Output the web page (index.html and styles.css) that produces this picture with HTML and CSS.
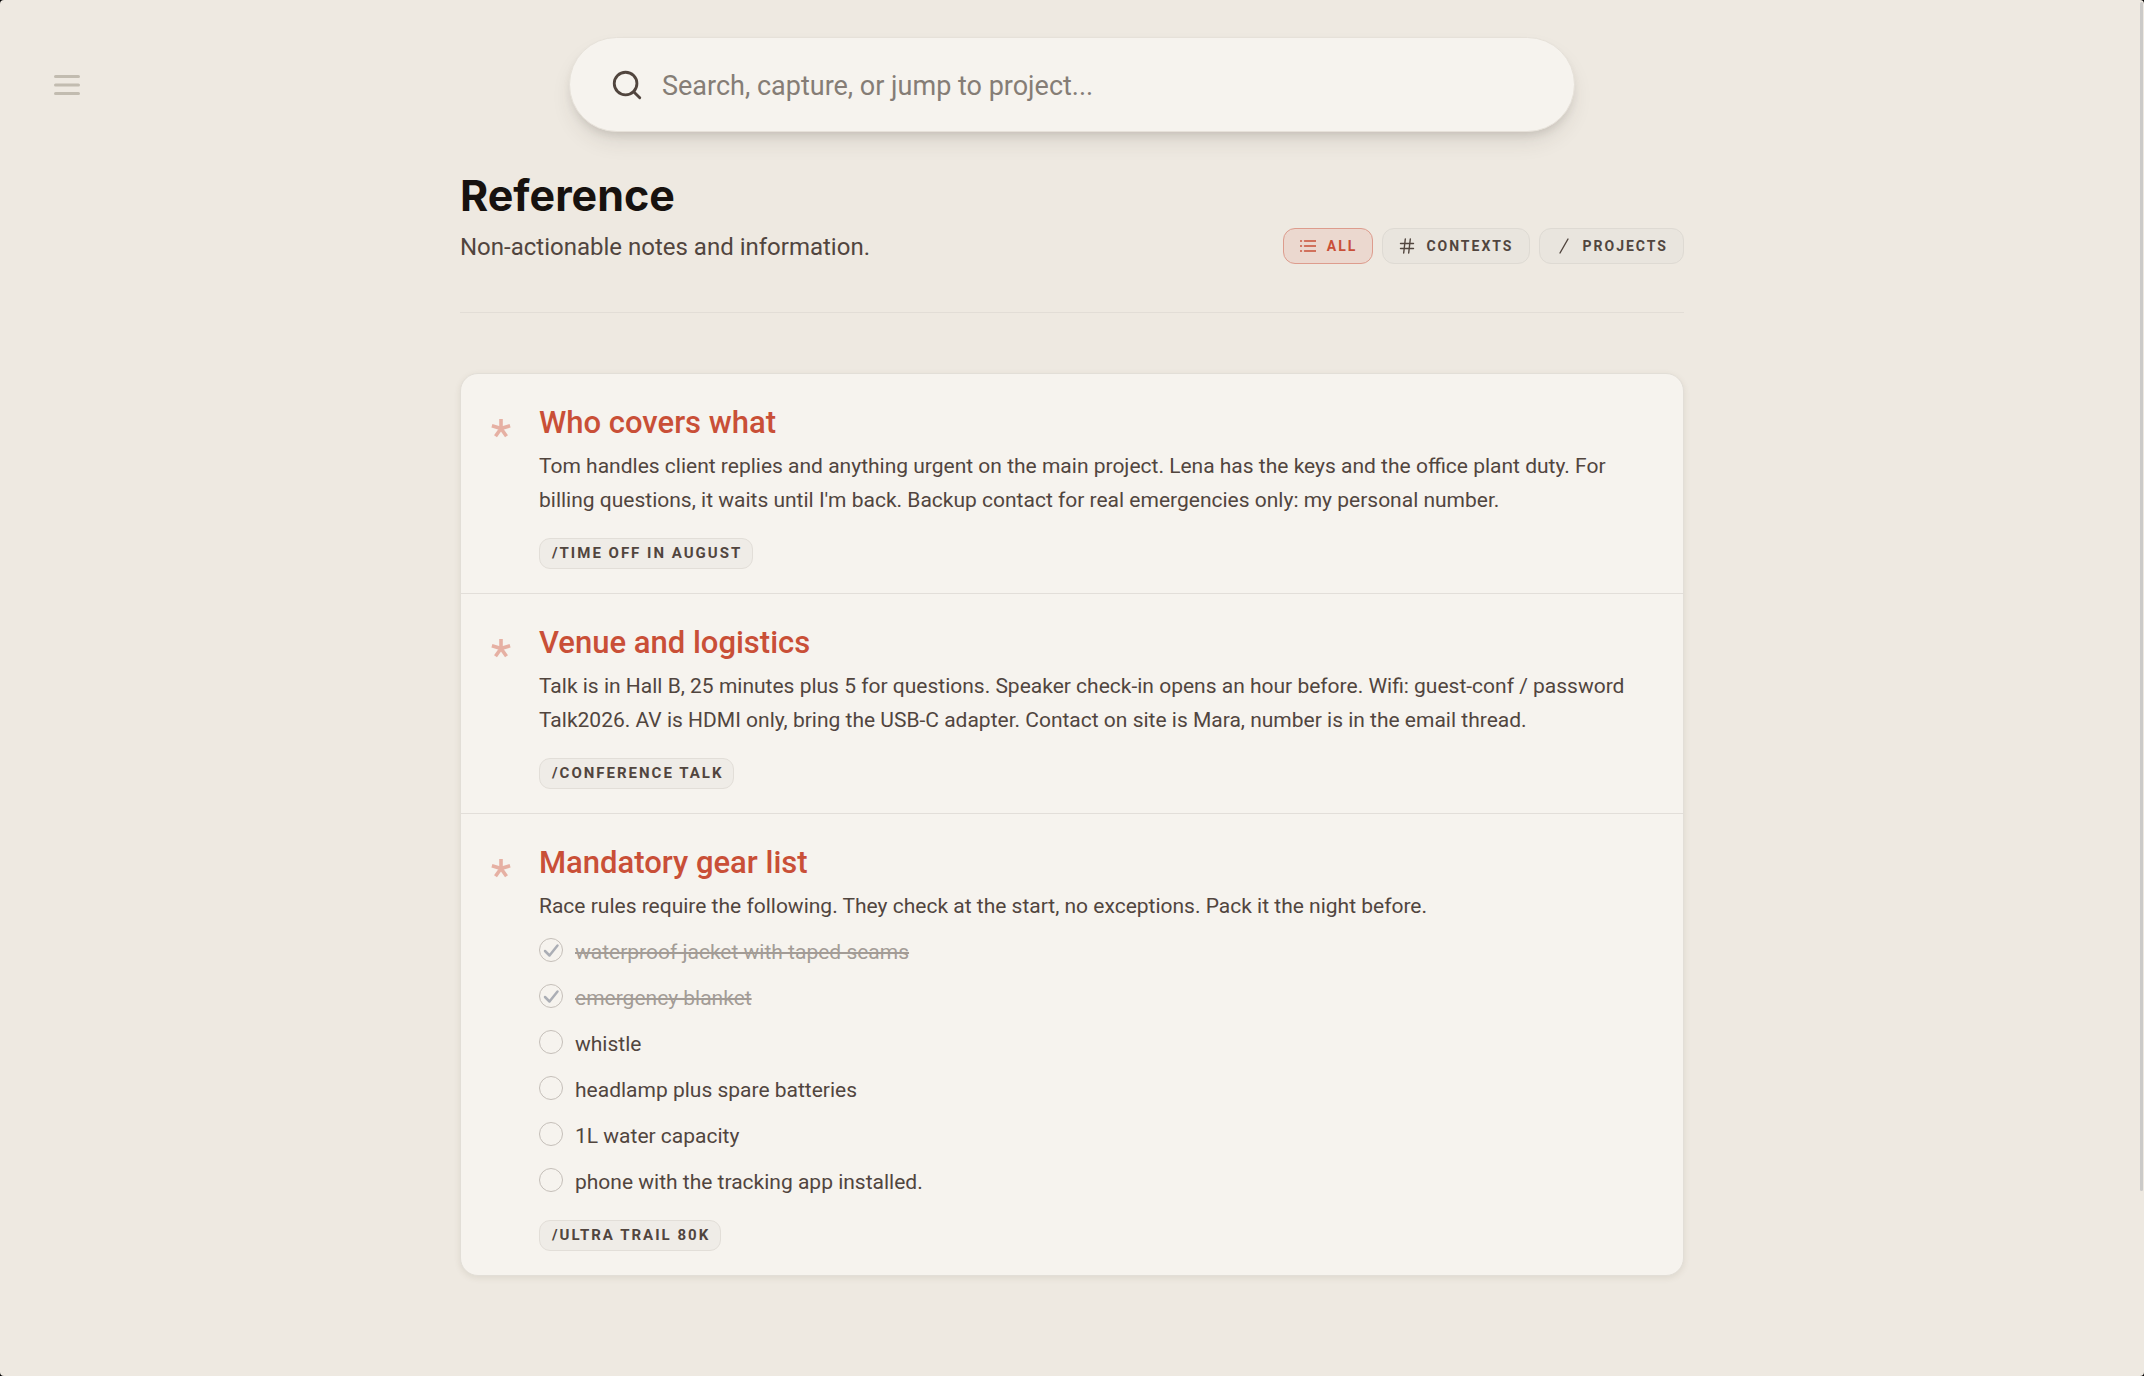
FILE: index.html
```html
<!DOCTYPE html>
<html lang="en">
<head>
    <meta charset="UTF-8">
    <meta name="viewport" content="width=device-width, initial-scale=1.0">
    <title>Reference</title>
    <link rel="stylesheet" href="styles.css">
</head>
<body>
    <div class="window">
        <header class="topbar">
            <button class="menu-btn" type="button" aria-label="Open menu">
                <svg viewBox="0 0 26 22" width="26" height="22"><path d="M1.5 2.5h23M1.5 11h23M1.5 19.5h23"/></svg>
            </button>
            <label class="search">
                <svg class="search-icon" viewBox="0 0 24 24" width="34" height="34"><circle cx="11" cy="11" r="8"/><path d="m21 21-4.3-4.3"/></svg>
                <input type="text" placeholder="Search, capture, or jump to project..." aria-label="Search">
            </label>
        </header>

        <main class="container">
            <div class="page-head">
                <div>
                    <h1>Reference</h1>
                    <p class="subtitle">Non-actionable notes and information.</p>
                </div>
                <div class="filters">
                    <button class="filter active" type="button">
                        <svg viewBox="0 0 16 16" width="16" height="16"><path d="M4.5 3H16M4.5 8H16M4.5 13H16M.5 3h1M.5 8h1M.5 13h1"/></svg>
                        All
                    </button>
                    <button class="filter" type="button">
                        <svg viewBox="0 0 16 16" width="16" height="16"><path d="M1.5 5.5h13M1.500 10.500h13M6.300 1 4.700 15M11.300 1 9.700 15"/></svg>
                        Contexts
                    </button>
                    <button class="filter" type="button">
                        <svg viewBox="0 0 16 16" width="16" height="16"><path d="M12 1 4 15"/></svg>
                        Projects
                    </button>
                </div>
            </div>

            <section class="notes">
                <article class="note">
                    <svg class="star" viewBox="0 0 20 20" width="20" height="20"><path d="M10 10.500V1M10 10.500.9 7.800M10 10.500 19.100 7.800M10 10.500 4.500 18.300M10 10.500 15.500 18.300"/></svg>
                    <div class="note-body">
                        <h2>Who covers what</h2>
                        <p>Tom handles client replies and anything urgent on the main project. Lena has the keys and the office plant duty. For billing questions, it waits until I'm back. Backup contact for real emergencies only: my personal number.</p>
                        <a class="tag" href="#">/Time off in August</a>
                    </div>
                </article>

                <article class="note">
                    <svg class="star" viewBox="0 0 20 20" width="20" height="20"><path d="M10 10.500V1M10 10.500.9 7.800M10 10.500 19.100 7.800M10 10.500 4.500 18.300M10 10.500 15.500 18.300"/></svg>
                    <div class="note-body">
                        <h2>Venue and logistics</h2>
                        <p>Talk is in Hall B, 25 minutes plus 5 for questions. Speaker check-in opens an hour before. Wifi: guest-conf / password Talk2026. AV is HDMI only, bring the USB-C adapter. Contact on site is Mara, number is in the email thread.</p>
                        <a class="tag" href="#">/Conference talk</a>
                    </div>
                </article>

                <article class="note">
                    <svg class="star" viewBox="0 0 20 20" width="20" height="20"><path d="M10 10.500V1M10 10.500.9 7.800M10 10.500 19.100 7.800M10 10.500 4.500 18.300M10 10.500 15.500 18.300"/></svg>
                    <div class="note-body">
                        <h2>Mandatory gear list</h2>
                        <p>Race rules require the following. They check at the start, no exceptions. Pack it the night before.</p>
                        <ul class="checklist">
                            <li><label><span class="check"><input type="checkbox" checked><svg viewBox="0 0 24 24" width="24" height="24"><path d="m6 13 4.500 4.500 8-10"/></svg></span><span class="text">waterproof jacket with taped seams</span></label></li>
                            <li><label><span class="check"><input type="checkbox" checked><svg viewBox="0 0 24 24" width="24" height="24"><path d="m6 13 4.500 4.500 8-10"/></svg></span><span class="text">emergency blanket</span></label></li>
                            <li><label><span class="check"><input type="checkbox"></span><span class="text">whistle</span></label></li>
                            <li><label><span class="check"><input type="checkbox"></span><span class="text">headlamp plus spare batteries</span></label></li>
                            <li><label><span class="check"><input type="checkbox"></span><span class="text">1L water capacity</span></label></li>
                            <li><label><span class="check"><input type="checkbox"></span><span class="text">phone with the tracking app installed.</span></label></li>
                        </ul>
                        <a class="tag" href="#">/Ultra trail 80K</a>
                    </div>
                </article>
            </section>
        </main>
    </div>
    <div class="scroll-thumb"></div>
</body>
</html>
```
FILE: styles.css
```css
* {
    box-sizing: border-box;
}

html {
    background: #000;
}

body {
    margin: 0;
    font-family: Roboto, "Liberation Sans", sans-serif;
    color: #51453e;
}

h1, h2, p, ul {
    margin: 0;
    padding: 0;
}

button, input {
    font-family: inherit;
    color: inherit;
}

svg {
    display: block;
    fill: none;
    stroke: currentColor;
    stroke-linecap: round;
    stroke-linejoin: round;
}

.window {
    min-height: 100vh;
    background: #eee9e1;
    border-radius: 4px;
}

/* Top bar */
.topbar {
    display: grid;
    grid-template-columns: 1fr minmax(0, 1006px) 1fr;
    align-items: center;
    padding-top: 37px;
}

.menu-btn {
    justify-self: start;
    margin-left: 54px;
    padding: 0;
    border: none;
    background: none;
    color: #c2bcb0;
    cursor: pointer;
}

.menu-btn svg {
    stroke-width: 3;
}

.search {
    grid-column: 2;
    display: flex;
    align-items: center;
    gap: 18px;
    height: 95px;
    padding: 0 40px;
    background: #f6f3ee;
    border: 1px solid #e6e1d9;
    border-radius: 48px;
    box-shadow: 0 12px 24px -6px rgba(60, 50, 40, 0.14), 0 5px 10px -3px rgba(60, 50, 40, 0.14);
}

.search-icon {
    flex: none;
    stroke-width: 2;
}

.search input {
    flex: 1;
    min-width: 0;
    padding: 2px 0 0;
    border: none;
    outline: none;
    background: none;
    font-size: 27px;
}

.search input::placeholder {
    color: #857d76;
    opacity: 1;
}

/* Page heading */
.container {
    max-width: 1224px;
    margin: 0 auto;
    padding: 37px 0 60px;
}

.page-head {
    display: flex;
    justify-content: space-between;
    align-items: flex-end;
    padding-bottom: 48px;
    border-bottom: 1px solid #e2ddd6;
}

h1 {
    font-family: Inter, "Liberation Sans", sans-serif;
    font-size: 43px;
    line-height: 52px;
    font-weight: 700;
    color: #17120f;
}

.subtitle {
    margin-top: 9px;
    font-size: 24px;
    line-height: 34px;
}

.filters {
    display: flex;
    gap: 9px;
}

.filter {
    display: flex;
    align-items: center;
    gap: 11px;
    height: 36px;
    padding: 0 15px 0 16px;
    border: 1px solid #dedad3;
    border-radius: 12px;
    background: #e9e5de;
    font-size: 14px;
    font-weight: 700;
    letter-spacing: 2px;
    text-transform: uppercase;
    cursor: pointer;
}

.filter svg {
    stroke-width: 1.4;
}

.filter.active {
    color: #c94f37;
    background: #ebd8cf;
    border-color: #dd9c8d;
}

/* Notes */
.notes {
    margin-top: 60px;
    background: #f6f3ee;
    border: 1px solid #e2ded7;
    border-radius: 18px;
    box-shadow: 0 2px 6px rgba(80, 70, 40, 0.1);
}

.note {
    display: flex;
    gap: 28px;
    padding: 29px 40px 24px 30px;
}

.note + .note {
    border-top: 1px solid #e2ded9;
}

.star {
    flex: none;
    margin-top: 15px;
    color: #e6b0a3;
    stroke-width: 3.6;
    stroke-linecap: butt;
}

.note-body {
    flex: 1;
    min-width: 0;
}

h2 {
    font-size: 31px;
    line-height: 40px;
    font-weight: 500;
    color: #c94f37;
}

.note p {
    margin-top: 6px;
    font-size: 21px;
    line-height: 34px;
}

.tag {
    display: block;
    width: fit-content;
    margin-top: 21px;
    padding: 0 10px 0 12px;
    border: 1px solid #e2ded8;
    border-radius: 11px;
    background: #efece7;
    color: inherit;
    font-size: 15px;
    line-height: 29px;
    font-weight: 700;
    letter-spacing: 2px;
    text-decoration: none;
    text-transform: uppercase;
}

/* Checklist */
.checklist {
    display: grid;
    gap: 12px;
    margin-top: 12px;
    list-style: none;
    font-size: 21px;
    line-height: 34px;
}

.checklist label {
    display: flex;
    gap: 12px;
}

.check {
    display: grid;
    margin-top: 3px;
    height: 24px;
}

.check input,
.check svg {
    grid-area: 1 / 1;
}

.check input {
    appearance: none;
    width: 24px;
    height: 24px;
    margin: 0;
    border: 1px solid #c5bfb9;
    border-radius: 50%;
}

.check svg {
    color: #abaeb5;
    stroke-width: 2.5;
    pointer-events: none;
}

.check:has(:checked) + .text {
    color: #a39c96;
    text-decoration: line-through;
}

.scroll-thumb {
    position: fixed;
    top: 2px;
    right: 1px;
    width: 3px;
    height: 86.4vh;
    border-radius: 2px;
    background: #cbcac8;
}
```
